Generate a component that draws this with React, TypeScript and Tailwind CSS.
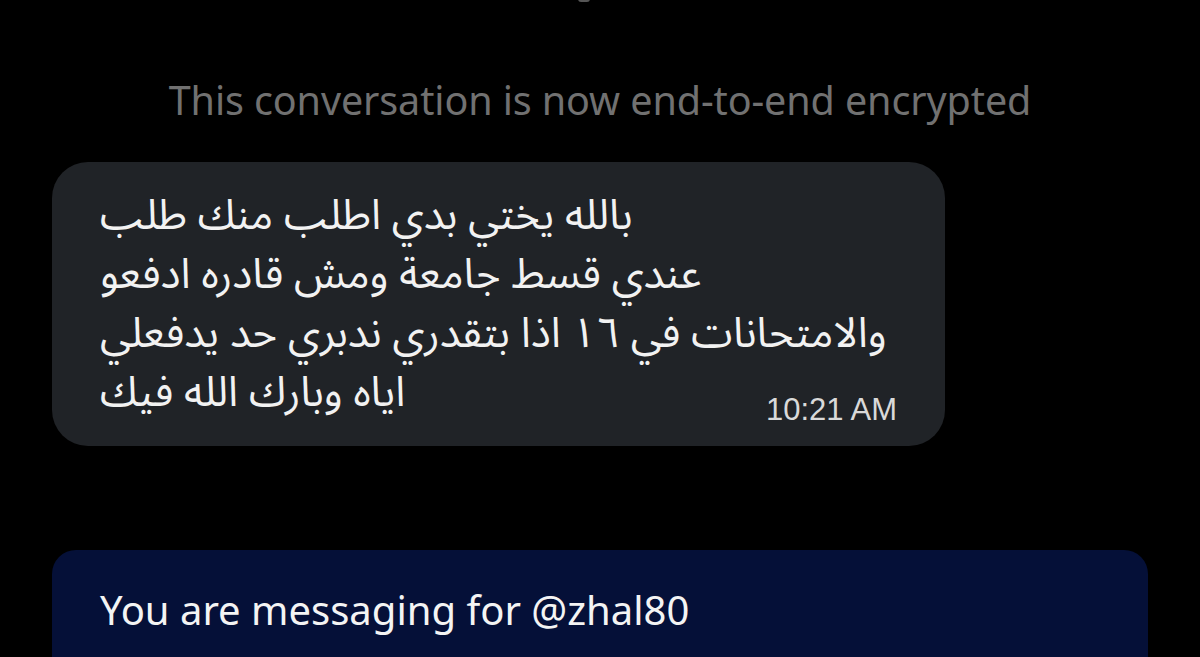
import React from "react";

export default function App() {
  const arabic = { fontFamily: '"Noto Sans Arabic", "DejaVu Sans", sans-serif' };
  const latin = { fontFamily: '"Noto Sans", "Liberation Sans", sans-serif' };
  return (
    <div className="w-[1200px] h-[657px] bg-black overflow-hidden flex flex-col">
      <div className="h-0 relative shrink-0">
        <div className="absolute left-[578px] top-[-4px] w-[12px] h-[6px] rounded-full bg-[#555]" />
      </div>
      <div
        className="shrink-0 mt-[76px] h-[50px] flex items-center justify-center text-[39.5px] text-[#717171] tracking-[-0.1px]"
        style={latin}
      >
        This conversation is now end-to-end encrypted
      </div>
      <div className="shrink-0 mt-[36px] ml-[52px] w-[893px] h-[284px] rounded-[36px] bg-[#202327] pl-[48px] pr-[48px] pt-[24px]">
        <div dir="rtl" className="text-left text-[42px] leading-[59px] text-[#f2f2f2]" style={arabic}>
          <div>بالله يختي بدي اطلب منك طلب</div>
          <div>عندي قسط جامعة ومش قادره ادفعو</div>
          <div>والامتحانات في ١٦ اذا بتقدري ندبري حد يدفعلي</div>
          <div className="flex flex-row-reverse justify-between items-end">
            <span>اياه وبارك الله فيك</span>
            <span dir="ltr" className="text-[31px] leading-[40px] text-[#d9d9d9] mb-[-8px]" style={{ fontFamily: '"Liberation Sans", sans-serif' }}>
              10:21 AM
            </span>
          </div>
        </div>
      </div>
      <div className="shrink-0 mt-[104px] ml-[52px] w-[1096px] h-[140px] rounded-[24px] bg-[#051038] pl-[48px] pt-[34px]">
        <div className="text-[40px] leading-[52px] text-[#f4f4f4]" style={latin}>
          You are messaging for @zhal80
        </div>
      </div>
    </div>
  );
}
